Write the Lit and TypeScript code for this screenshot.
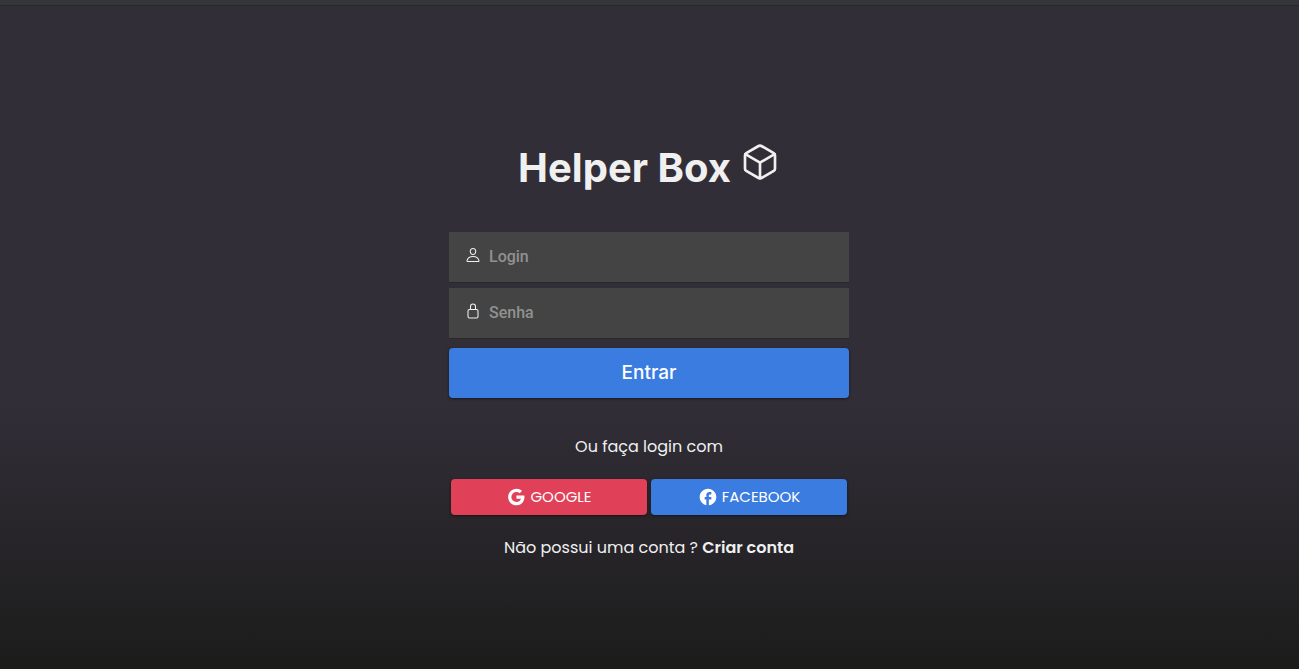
import { LitElement, css, html, svg } from "lit";
import { customElement } from "lit/decorators.js";

const cubeIcon = svg`
  <path d="M448 341.37V170.61A32 32 0 00432.11 143l-152-88.46a47.94 47.94 0 00-48.24 0L79.89 143A32 32 0 0064 170.61v170.76A32 32 0 0079.89 369l152 88.46a48 48 0 0048.24 0l152-88.46A32 32 0 00448 341.37z"/>
  <path d="M69 153.99l187 110 187-110M256 463.99v-200"/>`;

const personIcon = svg`
  <path d="M344 144c-3.92 52.87-44 96-88 96s-84.15-43.12-88-96c-4-55 35-96 88-96s92 42 88 96z"/>
  <path d="M256 304c-87 0-175.3 48-191.64 138.6C62.39 453.52 68.57 464 80 464h352c11.44 0 17.62-10.48 15.65-21.4C431.3 352 343 304 256 304z"/>`;

const lockIcon = svg`
  <path d="M336 208v-95a80 80 0 00-160 0v95"/>
  <rect x="96" y="208" width="320" height="272" rx="48" ry="48"/>`;

const googleIcon = svg`
  <path d="M12.545 10.239v3.821h5.445c-.712 2.315-2.647 3.972-5.445 3.972a6.033 6.033 0 110-12.064c1.498 0 2.866.549 3.921 1.453l2.814-2.814A9.969 9.969 0 0012.545 2C7.021 2 2.543 6.477 2.543 12s4.478 10 10.002 10c8.396 0 10.249-7.85 9.426-11.748l-9.426-.013z"/>`;

const facebookIcon = svg`
  <path d="M22 12c0-5.52-4.48-10-10-10S2 6.48 2 12c0 4.84 3.44 8.87 8 9.8V15H8v-3h2V9.5C10 7.57 11.57 6 13.5 6H16v3h-2c-.55 0-1 .45-1 1v2h3v3h-3v6.95c5.05-.5 9-4.76 9-9.95z"/>`;

@customElement("app-root")
export class AppRoot extends LitElement {
  static styles = css`
    :host {
      display: flex;
      flex-direction: column;
      min-height: 100vh;
      color: #f0f0f0;
      font-family: Poppins, Inter, sans-serif;
      font-size: 16px;
      line-height: 24px;
      background: linear-gradient(#322e38 60%, #1c1c1b);
    }
    * {
      box-sizing: border-box;
    }
    .topbar {
      height: 6px;
      background: #35363a;
      border-bottom: 1px solid #28272b;
    }
    .page {
      flex: 1;
      display: flex;
      flex-direction: column;
      align-items: center;
      justify-content: center;
      padding: 48px 17px 0 16px;
    }
    .brand {
      display: flex;
      align-items: center;
      gap: 9px;
      margin: 0 0 38px;
      font: 700 40px/48px Inter, sans-serif;
    }
    .brand svg {
      width: 40px;
      height: 40px;
      margin-bottom: 12px;
    }
    .outline {
      fill: none;
      stroke: currentColor;
      stroke-width: 34;
      stroke-linejoin: round;
      stroke-linecap: round;
    }
    .form {
      display: flex;
      flex-direction: column;
      width: 100%;
      max-width: 400px;
    }
    .field {
      display: flex;
      align-items: center;
      gap: 8px;
      height: 50px;
      margin-bottom: 6px;
      padding: 0 16px;
      background: #444444;
      box-shadow: 0 1px 0 #29282a;
    }
    .field svg {
      flex: none;
      width: 16px;
      height: 16px;
      margin-bottom: 4px;
    }
    .field input {
      flex: 1;
      min-width: 0;
      padding: 0;
      border: 0;
      outline: 0;
      background: none;
      color: #f0f0f0;
      font: 500 16px/24px Roboto, sans-serif;
    }
    .field input::placeholder {
      color: #919191;
      opacity: 1;
    }
    button {
      border: 0;
      border-radius: 4px;
      color: #ffffff;
      cursor: pointer;
      background: #3a7ce0;
      box-shadow: 0 1px 3px rgba(0, 0, 0, 0.5);
    }
    .submit {
      height: 50px;
      margin-top: 4px;
      font: 500 19px/24px Inter, sans-serif;
    }
    .hint {
      margin: 37px 0 20px;
      text-align: center;
    }
    .social {
      display: grid;
      grid-template-columns: 1fr 1fr;
      gap: 4px;
      padding: 0 2px;
    }
    .social button {
      display: flex;
      align-items: center;
      justify-content: center;
      gap: 4px;
      height: 36px;
      font: 400 15px/24px Poppins, Inter, sans-serif;
      text-transform: uppercase;
    }
    .social svg {
      width: 20px;
      height: 20px;
      fill: currentColor;
    }
    .google {
      background: #e04158;
    }
    .signup {
      margin: 21px 0;
      text-align: center;
    }
    .signup a {
      color: inherit;
      font-weight: 600;
      text-decoration: none;
    }
  `;

  render() {
    return html`
      <div class="topbar"></div>
      <main class="page">
        <h1 class="brand">
          Helper Box
          <svg class="outline" viewBox="0 0 512 512" aria-hidden="true">${cubeIcon}</svg>
        </h1>
        <form class="form" @submit=${(e: Event) => e.preventDefault()}>
          <label class="field">
            <svg class="outline" viewBox="0 0 512 512" aria-hidden="true">${personIcon}</svg>
            <input type="text" name="login" placeholder="Login" aria-label="Login" autocomplete="username" />
          </label>
          <label class="field">
            <svg class="outline" viewBox="0 0 512 512" aria-hidden="true">${lockIcon}</svg>
            <input type="password" name="senha" placeholder="Senha" aria-label="Senha" autocomplete="current-password" />
          </label>
          <button class="submit" type="submit">Entrar</button>
          <p class="hint">Ou faça login com</p>
          <div class="social">
            <button class="google" type="button">
              <svg viewBox="0 0 24 24" aria-hidden="true">${googleIcon}</svg>Google
            </button>
            <button type="button">
              <svg viewBox="0 0 24 24" aria-hidden="true">${facebookIcon}</svg>Facebook
            </button>
          </div>
          <p class="signup">Não possui uma conta ? <a href="#criar-conta">Criar conta</a></p>
        </form>
      </main>
    `;
  }
}
